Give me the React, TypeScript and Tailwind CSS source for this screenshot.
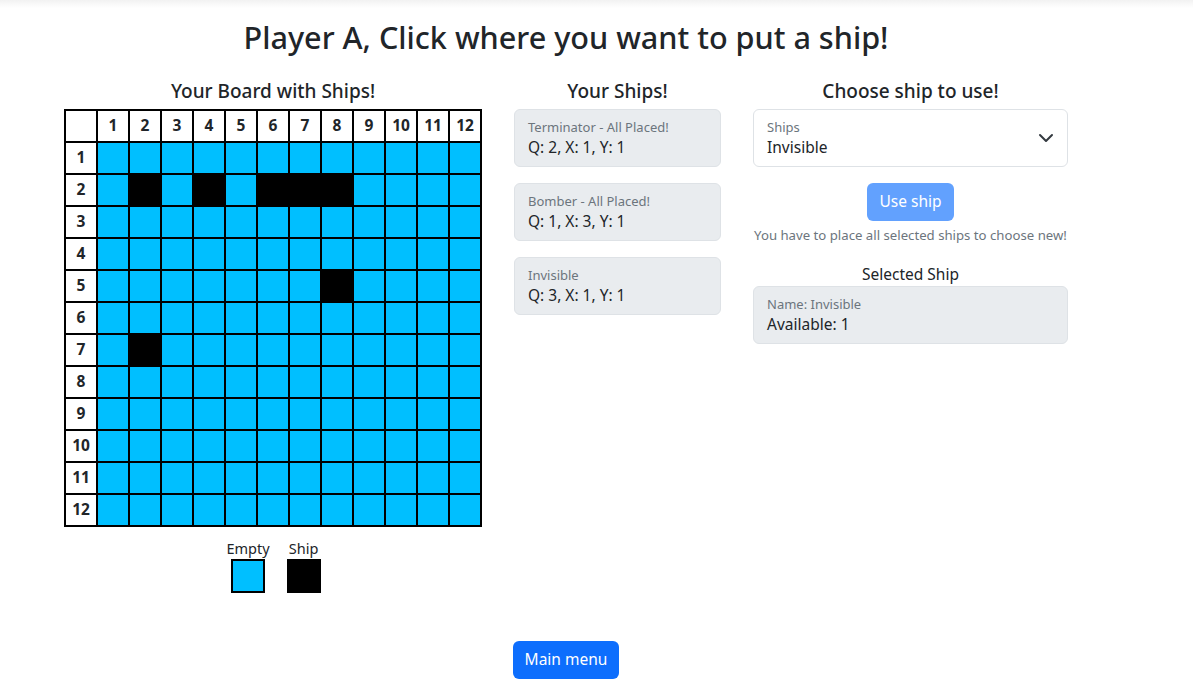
import React from "react";

const ships = new Set(["2-2", "2-4", "2-6", "2-7", "2-8", "5-8", "7-2"]);
const nums = Array.from({ length: 12 }, (_, i) => i + 1);

function Board() {
  const cells: React.ReactNode[] = [];
  cells.push(<div key="corner" className="bg-white" />);
  nums.forEach((n) =>
    cells.push(
      <div key={"h" + n} className="bg-white flex items-center justify-center font-bold text-[15.5px]">
        {n}
      </div>
    )
  );
  nums.forEach((r) => {
    cells.push(
      <div key={"r" + r} className="bg-white flex items-center justify-center font-bold text-[15.5px]">
        {r}
      </div>
    );
    nums.forEach((c) =>
      cells.push(
        <div key={r + "-" + c} className={ships.has(r + "-" + c) ? "bg-black" : "bg-[#00bfff]"} />
      )
    );
  });
  return (
    <div className="grid grid-cols-[repeat(13,30px)] auto-rows-[30px] gap-[2px] p-[2px] bg-black w-[418px]">
      {cells}
    </div>
  );
}

function InfoCard({ label, value }: { label: string; value: string }) {
  return (
    <div className="h-[58px] rounded-[6px] border border-[#dee2e6] bg-[#e9ecef] pl-[13px] pt-[7px]">
      <div className="text-[13px] leading-[20px] text-[#6c757d]">{label}</div>
      <div className="text-[15.5px] leading-[21px] text-[#212529]">{value}</div>
    </div>
  );
}

export default function App() {
  return (
    <div className="min-h-[693px] bg-white text-[#212529] relative" style={{ fontFamily: '"Noto Sans", "Open Sans", sans-serif' }}>
      <div className="absolute top-0 left-0 right-0 h-[8px] bg-gradient-to-b from-[#f2f2f2] to-white" />
      <div className="ml-[64px] w-[1004px] flex flex-col items-center relative">
        <h1 className="mt-[14px] text-[30.6px] leading-[46px] font-medium">Player A, Click where you want to put a ship!</h1>
        <div className="mt-[18px] flex w-full gap-[32px]">
          <div className="w-[418px] flex flex-col items-center">
            <h5 className="text-[19px] leading-[26px] font-medium mb-[5px]">Your Board with Ships!</h5>
            <Board />
            <div className="flex gap-[17px] mt-[11px] pl-[1px]">
              <div className="flex flex-col items-center">
                <div className="text-[14.5px] leading-[21px]">Empty</div>
                <div className="w-[34px] h-[34px] border-2 border-black bg-[#00bfff]" />
              </div>
              <div className="flex flex-col items-center">
                <div className="text-[14.5px] leading-[21px]">Ship</div>
                <div className="w-[34px] h-[34px] bg-black" />
              </div>
            </div>
          </div>
          <div className="w-[207px] flex flex-col">
            <h5 className="text-[19px] leading-[26px] font-medium mb-[5px] text-center">Your Ships!</h5>
            <div className="flex flex-col gap-[16px]">
              <InfoCard label="Terminator - All Placed!" value="Q: 2, X: 1, Y: 1" />
              <InfoCard label="Bomber - All Placed!" value="Q: 1, X: 3, Y: 1" />
              <InfoCard label="Invisible" value="Q: 3, X: 1, Y: 1" />
            </div>
          </div>
          <div className="w-[315px] flex flex-col">
            <h5 className="text-[19px] leading-[26px] font-medium mb-[5px] text-center">Choose ship to use!</h5>
            <div className="h-[58px] rounded-[6px] border border-[#dee2e6] bg-white pl-[13px] pt-[7px] pr-[12px] flex items-center justify-between">
              <div className="self-start">
                <div className="text-[13px] leading-[20px] text-[#6c757d]">Ships</div>
                <div className="text-[15.5px] leading-[21px]">Invisible</div>
              </div>
              <svg width="16" height="16" viewBox="0 0 16 16" className="mr-[1px] -mt-[7px]">
                <path d="m2 5 6 6 6-6" fill="none" stroke="#343a40" strokeWidth="2" strokeLinecap="round" strokeLinejoin="round" />
              </svg>
            </div>
            <div className="flex justify-center mt-[16px]">
              <button className="h-[38px] px-[12px] rounded-[6px] bg-[#62a1fe] text-white text-[15.5px]">Use ship</button>
            </div>
            <div className="text-center text-[13.2px] leading-[20px] text-[#6c757d] mt-[4px] whitespace-nowrap">
              You have to place all selected ships to choose new!
            </div>
            <div className="text-center text-[15.5px] leading-[24px] mt-[17px]">Selected Ship</div>
            <div>
              <InfoCard label="Name: Invisible" value="Available: 1" />
            </div>
          </div>
        </div>
        <button className="mt-[48px] h-[38px] px-[12px] rounded-[6px] bg-[#0d6efd] text-white text-[15.5px]">Main menu</button>
      </div>
    </div>
  );
}
